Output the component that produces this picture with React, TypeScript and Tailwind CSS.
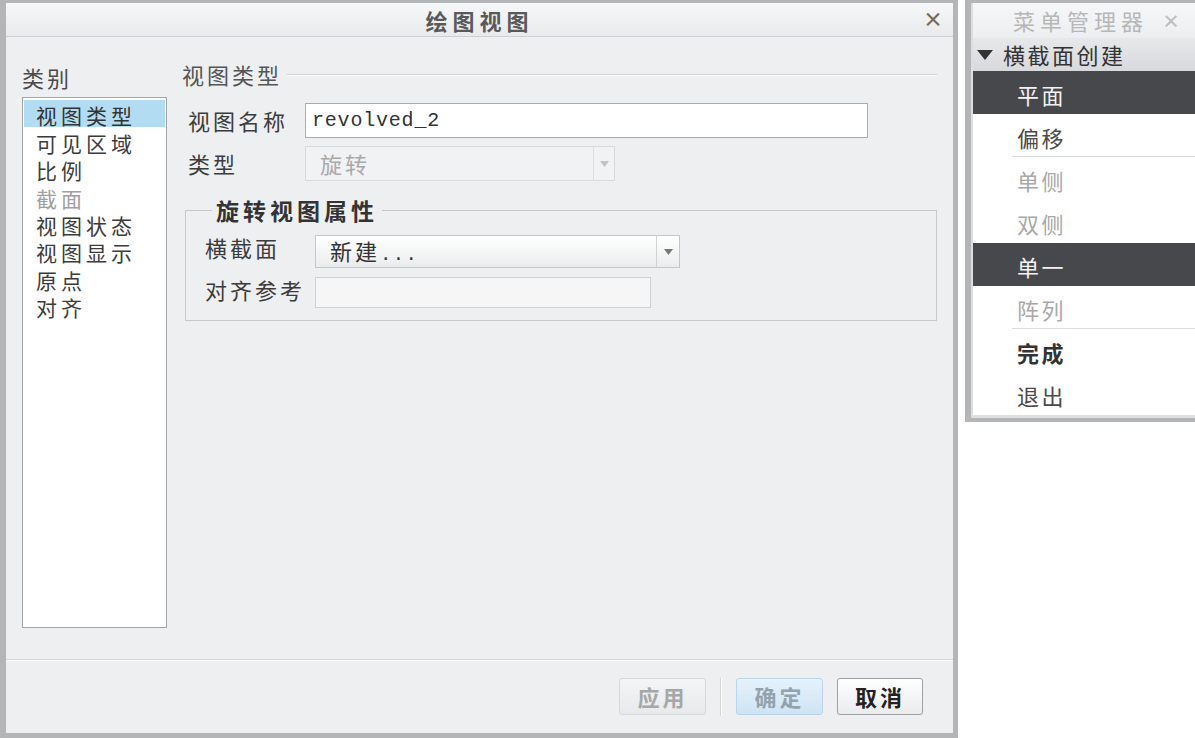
import React from "react";

const cjk = "font-['Noto_Sans_CJK_SC',sans-serif]";
const mono = "font-['Liberation_Mono','DejaVu_Sans_Mono',monospace]";

const categories = [
  { label: "视图类型", active: true },
  { label: "可见区域" },
  { label: "比例" },
  { label: "截面", disabled: true },
  { label: "视图状态" },
  { label: "视图显示" },
  { label: "原点" },
  { label: "对齐" },
];

type MenuItem = { label: string; tone: "dark" | "normal" | "muted" | "bold"; line?: boolean };

const menuItems: MenuItem[] = [
  { label: "平面", tone: "dark" },
  { label: "偏移", tone: "normal", line: true },
  { label: "单侧", tone: "muted" },
  { label: "双侧", tone: "muted" },
  { label: "单一", tone: "dark" },
  { label: "阵列", tone: "muted", line: true },
  { label: "完成", tone: "bold" },
  { label: "退出", tone: "normal" },
];

function Caret({ color }: { color: string }) {
  return (
    <svg width="9" height="6" viewBox="0 0 9 6">
      <path d="M0 0 L9 0 L4.5 6 Z" fill={color} />
    </svg>
  );
}

function Dialog() {
  return (
    <div className="w-[958px] h-[738px] shrink-0 flex flex-col bg-[#eeeff1] border-[#b3b5b7] border-l-[6px] border-r-[5px] border-t-[3px] border-b-[5px]">
      {/* barra de título */}
      <div className="relative h-[34px] shrink-0 flex items-center justify-center bg-gradient-to-b from-[#f6f7f8] to-[#e8eaec] border-b border-[#cdd0d2]">
        <span className="text-[22px] font-bold tracking-[5px] text-[#595959] leading-none">绘图视图</span>
        <span className="absolute right-[10px] top-[6px] text-[20px] font-bold text-[#6a6a6a] leading-none">×</span>
      </div>

      <div className="flex-1 flex pt-[24px]">
        {/* categorías */}
        <div className="ml-[16px] w-[145px] shrink-0">
          <div className="h-[27.5px] leading-[27.5px] mt-[3px] text-[22px] tracking-[3px] text-[#4a4a4a]">类别</div>
          <div className="mt-[5.5px] h-[531px] border border-[#a3a5a7] bg-white pt-[2px] px-[1px]">
            {categories.map((c) => (
              <div
                key={c.label}
                className={`h-[27.4px] pl-[12px] flex items-end ${
                  c.active ? "bg-[#b2dcf2] text-[#333]" : c.disabled ? "text-[#a0a0a0]" : "text-[#3c3c3c]"
                }`}
              >
                <span className="text-[21px] leading-[24px] tracking-[4px]">{c.label}</span>
              </div>
            ))}
          </div>
        </div>

        {/* panel derecho */}
        <div className="ml-[15px] w-[755px] shrink-0">
          <div className="h-[27.5px] flex items-center">
            <span className="text-[22px] tracking-[3px] text-[#555] leading-[27.5px]">视图类型</span>
            <div className="flex-1 ml-[5px] h-[2px] border-t border-[#d0d2d4] border-b border-b-white" />
          </div>

          <div className="mt-[14.5px] h-[35px] flex items-center">
            <span className="w-[123px] pl-[6px] text-[22px] tracking-[3px] text-[#3c3c3c]">视图名称</span>
            <div className="w-[563px] h-full border border-[#a9abad] bg-white flex items-center pl-[6px]">
              <span className={`${mono} text-[20px] tracking-[0.8px] text-[#333]`}>revolved_2</span>
            </div>
          </div>

          <div className="mt-[8px] h-[35px] flex items-center">
            <span className="w-[123px] pl-[6px] text-[22px] tracking-[3px] text-[#3c3c3c]">类型</span>
            <div className="w-[310px] h-full border border-[#d8dadc] bg-[#f1f2f3] flex">
              <div className="flex-1 flex items-center pl-[14px] text-[22px] tracking-[3px] text-[#a9a9a9]">旋转</div>
              <div className="w-[21px] border-l border-[#dcdedf] flex items-center justify-center">
                <Caret color="#c2c2c2" />
              </div>
            </div>
          </div>

          {/* grupo de propiedades */}
          <div className="relative mt-[29px] ml-[3px] w-[752px] border border-[#c6c8ca] pt-[24px] pb-[12px]">
            <span className="absolute left-[26px] -top-[14px] px-[4px] bg-[#eeeff1] text-[23px] font-bold tracking-[4px] leading-[27.5px] text-[#333]">
              旋转视图属性
            </span>
            <div className="flex items-start h-[33px]">
              <span className="w-[129px] pl-[19px] text-[22px] tracking-[3px] leading-[24px] text-[#3c3c3c]">横截面</span>
              <div className="w-[365px] h-full border border-[#c4c6c8] bg-gradient-to-b from-white to-[#ebeced] flex">
                <div className="flex-1 flex items-center pl-[14px] text-[#333]">
                  <span className="text-[22px] tracking-[3px]">
                    新建<span className={`${mono} text-[19px] tracking-[1.4px]`}>...</span>
                  </span>
                </div>
                <div className="w-[23px] border-l border-[#cfd1d3] flex items-center justify-center">
                  <Caret color="#777" />
                </div>
              </div>
            </div>
            <div className="mt-[9px] flex items-start h-[31px]">
              <span className="w-[129px] pl-[19px] text-[22px] tracking-[3px] leading-[24px] text-[#3c3c3c]">对齐参考</span>
              <div className="w-[336px] h-full border border-[#cfd1d3] bg-[#f6f6f7]" />
            </div>
          </div>
        </div>
      </div>

      {/* pie con botones */}
      <div className="h-[74px] shrink-0 border-t border-[#d3d5d7] shadow-[inset_0_1px_0_#fafafa] flex justify-end items-start pt-[18px] pr-[30px]">
        <button className="w-[87px] h-[37px] rounded-[3px] border border-[#d6d8da] bg-gradient-to-b from-[#f4f5f6] to-[#e8e9ea] text-[22px] font-bold tracking-[3px] text-[#a7a7a7]">
          应用
        </button>
        <div className="mx-[14px] w-[2px] h-[38px] border-l border-[#d3d5d7] border-r border-r-white" />
        <button className="w-[87px] h-[37px] rounded-[3px] border border-[#bad5e8] bg-gradient-to-b from-[#e6f2fb] to-[#cde4f4] text-[22px] font-bold tracking-[3px] text-[#93a3ad]">
          确定
        </button>
        <button className="ml-[14px] w-[86px] h-[37px] rounded-[3px] border border-[#9d9fa1] bg-gradient-to-b from-white to-[#eaebec] text-[22px] font-bold tracking-[3px] text-[#222]">
          取消
        </button>
      </div>
    </div>
  );
}

function MenuManager() {
  return (
    <div className="ml-[7px] w-[240px] h-[422px] shrink-0 flex flex-col border-[#b3b5b7] border-l-[6px] border-t-[3px] border-b-[5px] bg-white">
      <div className="flex-1 flex flex-col border-l-[2px] border-b-[3px] border-[#dcdedf]">
        <div className="h-[35px] flex items-center bg-gradient-to-b from-[#f6f7f8] to-[#eceef0]">
          <span className="ml-[40px] text-[22px] tracking-[5px] text-[#b7b7b7]">菜单管理器</span>
          <span className="ml-[14px] text-[18px] font-bold text-[#bdbdbd]">×</span>
        </div>
        <div className="h-[33px] flex items-center bg-gradient-to-b from-[#e6e8ea] to-[#d7d9dc]">
          <svg className="ml-[4px]" width="16" height="10" viewBox="0 0 16 10">
            <path d="M0 0 L16 0 L8 10 Z" fill="#333" />
          </svg>
          <span className="ml-[10px] text-[22px] tracking-[2.5px] text-[#333]">横截面创建</span>
        </div>
        {menuItems.map((m) => (
          <div key={m.label} className="relative">
            <div
              className={`h-[43px] flex items-center pt-[4px] pl-[44px] text-[22px] tracking-[2.5px] ${
                m.tone === "dark"
                  ? "bg-[#47484c] text-[#f2f2f2]"
                  : m.tone === "muted"
                  ? "text-[#a8a8a8]"
                  : m.tone === "bold"
                  ? "font-bold text-[#333]"
                  : "text-[#4a4a4a]"
              }`}
            >
              {m.label}
            </div>
            {m.line && <div className="absolute bottom-0 left-[39px] right-0 border-t border-[#dadcde]" />}
          </div>
        ))}
      </div>
    </div>
  );
}

export default function App() {
  return (
    <div className={`flex w-[1195px] h-[738px] bg-white overflow-hidden ${cjk}`}>
      <Dialog />
      <MenuManager />
    </div>
  );
}
